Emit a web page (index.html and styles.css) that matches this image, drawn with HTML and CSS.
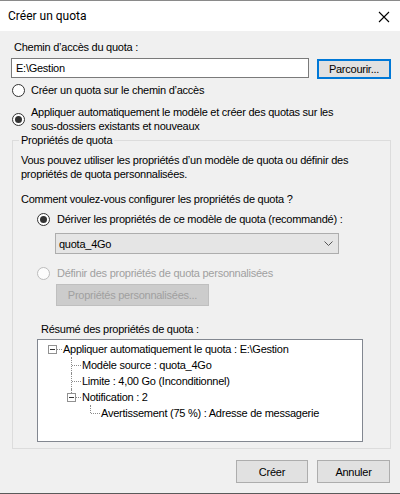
FILE: index.html
```html
<!DOCTYPE html>
<html lang="fr">
<head>
<meta charset="utf-8">
<title>Créer un quota</title>
<link rel="stylesheet" href="styles.css">
</head>
<body>
<div class="window">
  <div class="titlebar">
    <span class="title">Créer un quota</span>
    <svg class="close" width="12" height="12" viewBox="0 0 12 12"><path d="M1 1 L11 11 M11 1 L1 11" stroke="#000" stroke-width="1.1" fill="none"/></svg>
  </div>
  <div class="content">
    <div class="label path-label">Chemin d’accès du quota :</div>
    <div class="path-row">
      <div class="textbox">E:\Gestion</div>
      <div class="btn btn-default">Parcourir...</div>
    </div>
    <div class="radio-row r1">
      <span class="radio"></span>
      <span class="rtext">Créer un quota sur le chemin d’accès</span>
    </div>
    <div class="radio-row r2">
      <span class="radio checked"></span>
      <span class="rtext two">Appliquer automatiquement le modèle et créer des quotas sur les<br>sous-dossiers existants et nouveaux</span>
    </div>
    <fieldset class="group">
      <legend>Propriétés de quota</legend>
      <div class="desc">Vous pouvez utiliser les propriétés d’un modèle de quota ou définir des<br>propriétés de quota personnalisées.</div>
      <div class="question">Comment voulez-vous configurer les propriétés de quota ?</div>
      <div class="radio-row r3">
        <span class="radio checked"></span>
        <span class="rtext">Dériver les propriétés de ce modèle de quota (recommandé) :</span>
      </div>
      <div class="combo">
        <span>quota_4Go</span>
        <svg class="chev" width="9" height="5" viewBox="0 0 9 5"><path d="M0.5 0.5 L4.5 4.5 L8.5 0.5" stroke="#555" stroke-width="1" fill="none"/></svg>
      </div>
      <div class="radio-row r4 disabled">
        <span class="radio"></span>
        <span class="rtext">Définir des propriétés de quota personnalisées</span>
      </div>
      <div class="btn btn-disabled">Propriétés personnalisées...</div>
      <div class="summary-label">Résumé des propriétés de quota :</div>
      <div class="tree">
        <div class="node">
          <span class="tw root"><span class="box"></span></span><span class="nt">Appliquer automatiquement le quota : E:\Gestion</span>
        </div>
        <div class="node l1">
          <span class="tw mid"></span><span class="nt">Modèle source : quota_4Go</span>
        </div>
        <div class="node l1">
          <span class="tw mid"></span><span class="nt">Limite : 4,00 Go (Inconditionnel)</span>
        </div>
        <div class="node l1">
          <span class="tw lastbox"><span class="box"></span></span><span class="nt">Notification : 2</span>
        </div>
        <div class="node l2">
          <span class="tw last"></span><span class="nt">Avertissement (75 %) : Adresse de messagerie</span>
        </div>
      </div>
    </fieldset>
    <div class="actions">
      <div class="btn btn-ok">Créer</div>
      <div class="btn btn-cancel">Annuler</div>
    </div>
  </div>
</div>
</body>
</html>
```
FILE: styles.css
```css
html, body {
  margin: 0;
  padding: 0;
  background: #f0f0f0;
}
body {
  font-family: "Liberation Sans", Arial, sans-serif;
  font-size: 11px;
  letter-spacing: -0.25px;
  color: #000;
  white-space: nowrap;
}
.window {
  width: 400px;
  height: 494px;
  box-sizing: border-box;
  border-top: 1px solid #8a8a8a;
  border-bottom: 1px solid #5a5a5a;
  background: #f0f0f0;
  display: flex;
  flex-direction: column;
  overflow: hidden;
}
.titlebar {
  height: 30px;
  flex: none;
  background: #fff;
  display: flex;
  align-items: center;
  justify-content: space-between;
  padding: 0 10px 0 8px;
}
.title {
  font-family: Roboto, "Noto Sans", sans-serif;
  font-size: 12px;
  letter-spacing: 0;
  line-height: 15px;
}
.close {
  display: block;
  margin-top: 1px;
}
.content {
  padding: 0 9px 0 11px;
  display: flex;
  flex-direction: column;
}
.label, .rtext, .desc, .question, .summary-label, legend {
  line-height: 15px;
}
.path-label {
  margin-top: 9px;
  padding-left: 3px;
}
.path-row {
  margin-top: 3px;
  display: flex;
  gap: 8px;
  height: 21px;
  align-items: flex-start;
}
.textbox {
  width: 298px;
  height: 20px;
  box-sizing: border-box;
  border: 1px solid #7a7a7a;
  background: #fff;
  padding-left: 4px;
  line-height: 18px;
}
.btn {
  box-sizing: border-box;
  background: #e1e1e1;
  border: 1px solid #adadad;
  display: flex;
  align-items: center;
  justify-content: center;
  flex: none;
}
.btn-default {
  width: 74px;
  height: 20px;
  margin-top: 1px;
  border: 2px solid #0078d7;
}
.radio-row {
  display: flex;
  align-items: center;
}
.radio {
  width: 13px;
  height: 13px;
  box-sizing: border-box;
  border: 1px solid #333;
  border-radius: 50%;
  background: #fff;
  display: flex;
  align-items: center;
  justify-content: center;
  flex: none;
}
.radio.checked::after {
  content: "";
  width: 7px;
  height: 7px;
  border-radius: 50%;
  background: #333;
}
.r1 {
  margin-top: 4px;
  padding-left: 1px;
  gap: 6px;
}
.r2 {
  margin-top: 7px;
  padding-left: 1px;
  gap: 6px;
}
.rtext.two {
  line-height: 14px;
}
.group {
  margin: 0 0 0 1px;
  padding: 0 0 6px 8px;
  border: 1px solid #dcdcdc;
  min-width: 0;
}
.group legend {
  padding: 0 2px;
  margin-left: -2px;
}
.desc {
  margin-top: 5px;
  line-height: 14px;
}
.question {
  margin-top: 11px;
  line-height: 14px;
}
.r3 {
  margin-top: 6px;
  padding-left: 16px;
  gap: 7px;
}
.combo {
  margin-top: 6px;
  margin-left: 34px;
  width: 284px;
  height: 21px;
  box-sizing: border-box;
  border: 1px solid #adadad;
  background: #e5e5e5;
  display: flex;
  align-items: center;
  justify-content: space-between;
  padding: 0 5px 0 3px;
}
.chev {
  display: block;
}
.r4 {
  margin-top: 12px;
  padding-left: 16px;
  gap: 7px;
}
.disabled .radio {
  border-color: #bcbcbc;
  background: #fcfcfc;
}
.disabled .rtext {
  color: #a0a0a0;
}
.btn-disabled {
  margin-top: 3px;
  margin-left: 35px;
  width: 153px;
  height: 22px;
  background: #cccccc;
  border-color: #bfbfbf;
  color: #a0a0a0;
}
.summary-label {
  margin-top: 16px;
  margin-left: 20px;
}
.tree {
  margin-top: 2px;
  margin-left: 16px;
  width: 326px;
  height: 103px;
  box-sizing: border-box;
  border: 1px solid #828790;
  background: #fff;
  padding: 1px 0 0 5px;
}
.node {
  height: 16px;
  display: flex;
  align-items: center;
}
.node.l1 { padding-left: 19px; }
.node.l2 { padding-left: 38px; }
.tw {
  position: relative;
  width: 19px;
  height: 16px;
  flex: none;
}
.nt {
  padding-left: 1px;
  line-height: 16px;
}
.tw::before, .tw::after {
  content: "";
  position: absolute;
}
.tw::after {
  top: 8px;
  left: 10px;
  width: 9px;
  border-top: 1px dotted #8c8c8c;
}
.tw.mid::before {
  left: 9px;
  top: 0;
  height: 16px;
  border-left: 1px dotted #8c8c8c;
}
.tw.last::before {
  left: 9px;
  top: 0;
  height: 8px;
  border-left: 1px dotted #8c8c8c;
}
.tw.lastbox::before {
  left: 9px;
  top: 0;
  height: 4px;
  border-left: 1px dotted #8c8c8c;
}
.tw.root::after, .tw.lastbox::after {
  left: 14px;
  width: 5px;
}
.box {
  position: absolute;
  left: 5px;
  top: 4px;
  width: 9px;
  height: 9px;
  box-sizing: border-box;
  border: 1px solid #919191;
  background: #fff;
}
.box::after {
  content: "";
  position: absolute;
  left: 1px;
  top: 3px;
  width: 5px;
  height: 1px;
  background: #333;
}
.actions {
  margin-top: 11px;
  margin-right: 1px;
  display: flex;
  justify-content: flex-end;
  gap: 9px;
}
.btn-ok {
  width: 72px;
  height: 23px;
}
.btn-cancel {
  width: 73px;
  height: 23px;
}
```
